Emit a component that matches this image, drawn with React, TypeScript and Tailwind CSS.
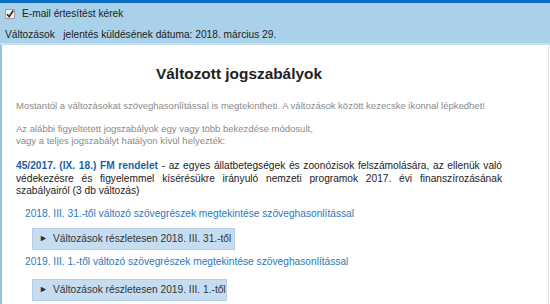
import React from "react";

export default function App() {
  return (
    <div
      className="w-[550px] h-[304px] overflow-hidden bg-white"
      style={{ fontFamily: '"Liberation Sans", Arial, sans-serif' }}
    >
      <div className="h-[3px] bg-[#0b6fc1]" />
      <div className="h-[42px] bg-[#a9d1ea] border-b-[2px] border-[#c6e1f1] pl-[5px] text-[10.2px] text-[#222]">
        <div className="flex items-center h-[20px] pt-[2px]">
          <svg width="10" height="10" viewBox="0 0 10 10" className="mr-[7px]">
            <rect x="0.5" y="0.5" width="9" height="9" fill="#f0f0f0" stroke="#a0a0a0" />
            <path d="M2 5.2 L4.2 7.6 L8.3 1.6" fill="none" stroke="#333" strokeWidth="1.7" />
          </svg>
          <span>E-mail értesítést kérek</span>
        </div>
        <div className="flex items-center h-[20px] pt-[4px]">
          <span>Változások&nbsp;&nbsp;&nbsp;jelentés küldésének dátuma: 2018. március 29.</span>
        </div>
      </div>
      <div className="h-[259px] border-l-[2px] border-[#8ec4e7] border-r border-r-[#e2e2e2] w-[549px] pl-[14px] text-[10.2px]">
        <div className="w-[446px] text-center pt-[19px] text-[15.4px] font-bold text-[#222] leading-[20px]">
          Változott jogszabályok
        </div>
        <div className="mt-[16px] text-[9.5px] leading-[12px] text-[#8a8a8a]">
          Mostantól a változásokat szöveghasonlítással is megtekintheti. A változások között kezecske ikonnal lépkedhet!
        </div>
        <div className="mt-[11px] text-[9.5px] leading-[12px] text-[#8a8a8a]">
          Az alábbi figyeltetett jogszabályok egy vagy több bekezdése módosult,
          <br />
          vagy a teljes jogszabályt hatályon kívül helyezték:
        </div>
        <div className="mt-[13px] w-[486px] text-justify leading-[12.5px] text-[#222]">
          <span className="font-bold text-[#1b5fa9]">45/2017. (IX. 18.) FM rendelet</span> - az egyes
          állatbetegségek és zoonózisok felszámolására, az ellenük való védekezésre és figyelemmel
          kísérésükre irányuló nemzeti programok 2017. évi finanszírozásának szabályairól (3 db változás)
        </div>
        <div className="mt-[10px] pl-[9px] leading-[12px] text-[#2a79bd]">
          2018. III. 31.-től változó szövegrészek megtekintése szöveghasonlítással
        </div>
        <div className="mt-[8px] ml-[16px] w-[203px] h-[22px] flex items-center pl-[6px] bg-[#c6ddf1] border border-[#b3cfea] text-[#333]">
          <span className="text-[9px] mr-[5px]">►</span>
          <span>Változások részletesen 2018. III. 31.-től</span>
        </div>
        <div className="mt-[6px] pl-[9px] leading-[12px] text-[#2a79bd]">
          2019. III. 1.-től változó szövegrészek megtekintése szöveghasonlítással
        </div>
        <div className="mt-[11px] ml-[16px] w-[195px] h-[22px] flex items-center pl-[6px] bg-[#c6ddf1] border border-[#b3cfea] text-[#333]">
          <span className="text-[9px] mr-[5px]">►</span>
          <span>Változások részletesen 2019. III. 1.-től</span>
        </div>
      </div>
    </div>
  );
}
